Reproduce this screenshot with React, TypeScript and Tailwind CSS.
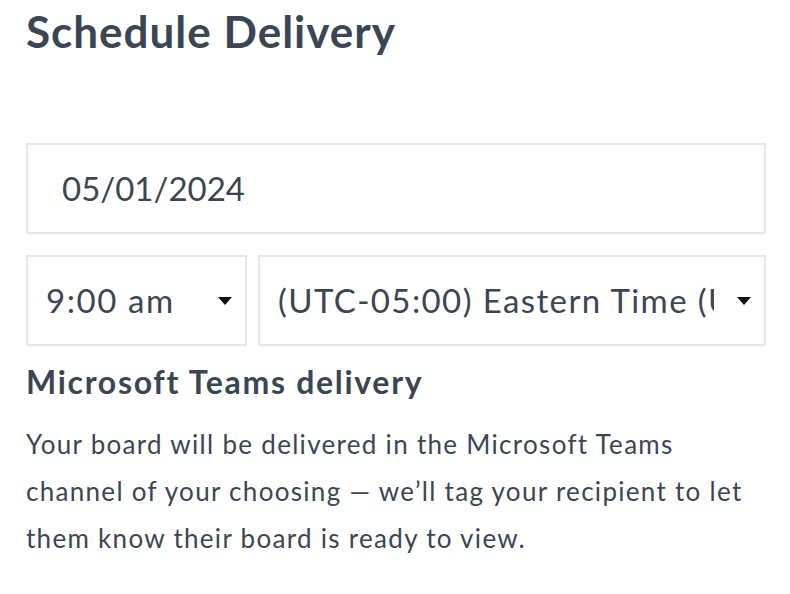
import React from "react";

const Caret: React.FC = () => (
  <svg width="14" height="8" viewBox="0 0 14 8" className="shrink-0">
    <path d="M0 0 L14 0 L7 8 Z" fill="#111" />
  </svg>
);

const App: React.FC = () => {
  return (
    <div
      className="w-[790px] h-[594px] bg-white text-[#3a4653] pl-[26px] pt-[5px] overflow-hidden"
      style={{ fontFamily: "Lato, 'Open Sans', sans-serif" }}
    >
      <h1 className="text-[44px] font-bold leading-[52px] tracking-[1px]">Schedule Delivery</h1>

      <div className="w-[740px] mt-[86px] flex flex-col gap-[21px]">
        {/* Date field */}
        <div className="h-[91px] border-2 border-[#e5e5ea] flex items-center pl-[34px] text-[33px] tracking-[0px]">
          05/01/2024
        </div>

        {/* Time + timezone */}
        <div className="flex gap-[11px]">
          <div className="w-[221px] h-[91px] border-2 border-[#e5e5ea] flex items-center justify-between pl-[18px] pr-[13px] text-[33px] tracking-[1.6px]">
            <span>9:00 am</span>
            <Caret />
          </div>
          <div className="flex-1 h-[91px] border-2 border-[#e5e5ea] flex items-center pl-[18px] pr-[13px] text-[33px] tracking-[1.4px]">
            <span className="w-[436px] overflow-hidden whitespace-nowrap">(UTC-05:00) Eastern Time (US &amp; Canada)</span>
            <span className="flex-1" />
            <Caret />
          </div>
        </div>
      </div>

      <h2 className="mt-[16px] text-[32px] font-bold leading-[40px] tracking-[1.7px]">Microsoft Teams delivery</h2>
      <p className="mt-[19px] text-[26px] leading-[47px] w-[760px] tracking-[1.3px]">
        Your board will be delivered in the Microsoft Teams
        <br />
        channel of your choosing — we’ll tag your recipient to let
        <br />
        them know their board is ready to view.
      </p>
    </div>
  );
};

export default App;
